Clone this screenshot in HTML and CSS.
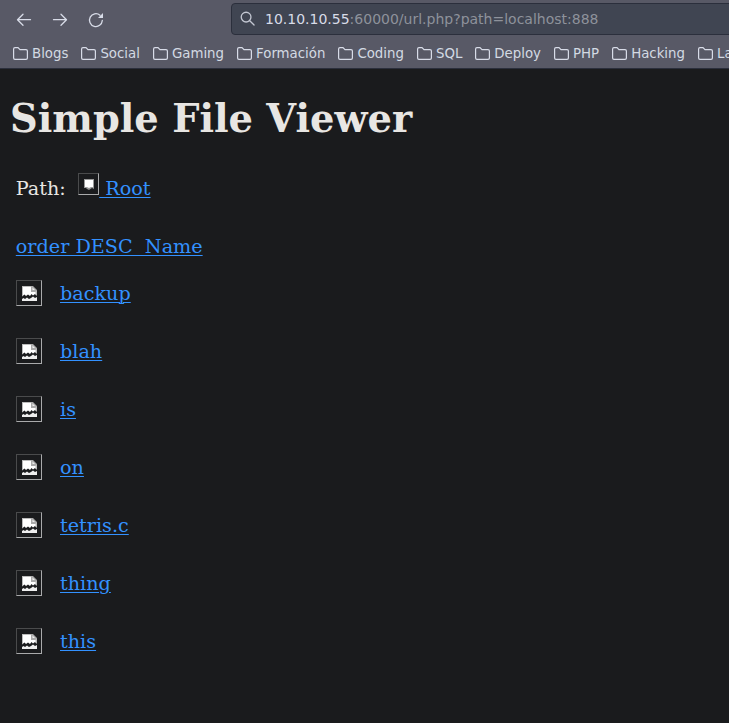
FILE: index.html
```
<!DOCTYPE html>
<html lang="en">
<head>
<meta charset="utf-8">
<title>Simple File Viewer</title>
<link rel="stylesheet" href="styles.css">
</head>
<body>
<svg class="defs" width="0" height="0" aria-hidden="true">
  <symbol id="folder" viewBox="0 0 15 13"><path d="M.6 11V2Q.6.600 2 .6h3l2 2h6q1.400 0 1.400 1.400v7q0 1.400-1.400 1.400H2Q.6 12.400.6 11Z" fill="none" stroke="#d8dce8" stroke-width="1.2"/></symbol>
  <symbol id="broken" viewBox="0 0 15 15"><path d="M0 0h9.500v5H15v4.500L13 8l-2 1.500L9.500 8 8 10 6 8.500 4 10 2.500 8.500 0 10.500Z" fill="#fff"/><path d="M0 0h11v1H1v9H0Z" fill="#bbb"/><path d="M9 0h2l4 4v2H9Z" fill="#aaa"/><path d="M10.500 1.500L13 4h-2.500Z" fill="#eee"/><path d="M13.500 5H15v4.500L13.500 9Z" fill="#bbb"/><path d="M0 13l1.500-1L3 13l2-1.500L7 13l2-1 2-1.500L13 12l2-1v4H0Z" fill="#eee"/></symbol>
</svg>
<header class="browser">
  <div class="toolbar">
    <svg class="nav" viewBox="0 0 16 16"><path d="M14.500 7.700H1.500M7 2.200L1.500 7.700 7 13.200"/></svg>
    <svg class="nav" viewBox="0 0 16 16"><path d="M1.500 7.700h13M9 2.200l5.500 5.500L9 13.200"/></svg>
    <svg class="nav" viewBox="0 0 16 16"><path d="M14.300 8.500A6.400 6.400 0 1 1 12 3.200"/><path class="solid" d="M15 1v5h-5Z"/></svg>
    <div class="address">
      <svg class="search" viewBox="0 0 16 16"><circle cx="6.500" cy="6.500" r="5.200"/><path d="M10.400 10.400l4.600 4.600"/></svg>
      <span class="url"><b>10.10.10.55</b>:60000/url.php?path=localhost:888</span>
    </div>
  </div>
  <nav class="bookmarks">
    <span><svg><use href="#folder"/></svg>Blogs</span>
    <span><svg><use href="#folder"/></svg>Social</span>
    <span><svg><use href="#folder"/></svg>Gaming</span>
    <span><svg><use href="#folder"/></svg>Formación</span>
    <span><svg><use href="#folder"/></svg>Coding</span>
    <span><svg><use href="#folder"/></svg>SQL</span>
    <span><svg><use href="#folder"/></svg>Deploy</span>
    <span><svg><use href="#folder"/></svg>PHP</span>
    <span><svg><use href="#folder"/></svg>Hacking</span>
    <span><svg><use href="#folder"/></svg>La</span>
  </nav>
</header>
<main>
  <h1>Simple File Viewer</h1>
  <div class="path"><span>Path:</span><span class="frame small"><svg viewBox="0 0 10 11"><path d="M0 0h10v10L8 9 6.500 10 5 11 3 10 2 9H0Z" fill="#999"/><path d="M1 1h8v7H7L5 9 3 8H1Z" fill="#fff"/></svg></span><a class="root" href="#">&nbsp;Root</a></div>
  <div class="order"><a href="#">order DESC&nbsp; Name</a></div>
  <ul>
    <li><span class="frame"><svg><use href="#broken"/></svg></span><a href="#">backup</a></li>
    <li><span class="frame"><svg><use href="#broken"/></svg></span><a href="#">blah</a></li>
    <li><span class="frame"><svg><use href="#broken"/></svg></span><a href="#">is</a></li>
    <li><span class="frame"><svg><use href="#broken"/></svg></span><a href="#">on</a></li>
    <li><span class="frame"><svg><use href="#broken"/></svg></span><a href="#">tetris.c</a></li>
    <li><span class="frame"><svg><use href="#broken"/></svg></span><a href="#">thing</a></li>
    <li><span class="frame"><svg><use href="#broken"/></svg></span><a href="#">this</a></li>
  </ul>
</main>
</body>
</html>
```
FILE: styles.css
```
* { box-sizing: border-box; }
html, body { margin: 0; height: 100%; overflow: hidden; background: #1a1b1d; }
body { font: 19.2px/22px "DejaVu Serif", serif; color: #e8e6e3; }
.defs { display: none; }
svg { display: block; flex: none; }

.browser { height: 69px; background: #585966; border-bottom: 1px solid #2b2f3c; font-family: "DejaVu Sans", sans-serif; overflow: hidden; }
.toolbar { display: flex; align-items: center; height: 39px; padding-left: 16px; gap: 20px; }
.nav { width: 16px; height: 16px; fill: none; stroke: #d8dce8; stroke-width: 1.3; stroke-linecap: round; stroke-linejoin: round; }
.nav .solid { fill: #d8dce8; stroke: none; }
.address { display: flex; align-items: center; flex: 1; height: 32px; margin: -1px -10px 0 107px; padding-left: 8px; background: #404552; border: 1px solid #2b2f3c; border-radius: 4px; }
.search { width: 15px; height: 15px; margin-top: -1px; fill: none; stroke: #c3c7d2; stroke-width: 1.4; stroke-linecap: round; }
.url { margin-left: 10px; font-size: 14px; line-height: 20px; color: #8e929b; white-space: nowrap; }
.url b { font-weight: 400; color: #d8dce8; }
.bookmarks { display: flex; height: 29px; padding-left: 13px; gap: 13px; font-size: 13.33px; line-height: 29px; color: #d3dae3; white-space: nowrap; }
.bookmarks span { display: flex; align-items: center; gap: 4px; flex: none; }
.bookmarks svg { width: 15px; height: 13px; }

h1 { margin: 27px 0 0 10px; font-size: 38.4px; line-height: 45px; }
a { color: #3391ff; text-decoration: underline; text-underline-offset: 2px; text-decoration-thickness: 1px; }
.path { display: flex; height: 22px; margin: 37px 0 0 15.800px; }
.frame { display: flex; align-items: center; justify-content: center; flex: none; width: 26px; height: 26px; border: 1px solid; border-color: #4a4b4c #a9aaab #a9aaab #4a4b4c; }
.frame svg { width: 15px; height: 15px; margin: 1px 0 0 1px; }
.small { width: 21px; height: 22px; margin: -5px 0 0 12.400px; }
.small svg { width: 10px; height: 11px; margin: 1px 0 0 1px; }
.order { margin: 36px 0 0 15.800px; }
ul { margin: 6px 0 0; padding: 0 0 0 16px; list-style: none; }
li { display: flex; align-items: center; gap: 18px; height: 58px; }
li a { padding-top: 2px; }
```
